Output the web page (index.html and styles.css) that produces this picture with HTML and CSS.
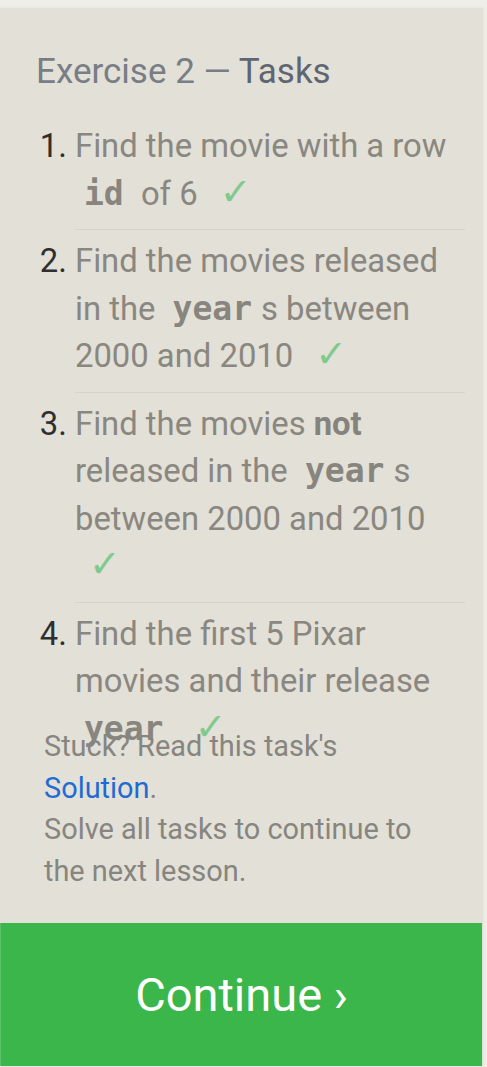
FILE: index.html
```html
<!DOCTYPE html>
<html lang="en">
<head>
<meta charset="utf-8">
<title>Exercise 2 — Tasks</title>
<link rel="stylesheet" href="styles.css">
</head>
<body>
<div class="panel">
  <h2 class="title"><span class="title-pre">Exercise 2 —</span> <span class="title-main">Tasks</span></h2>
  <ol class="tasks">
    <li class="task">Find the movie with a row <code class="code">id</code> of 6 <span class="check">✓</span></li>
    <li class="task">Find the movies released in the <code class="code">year</code>s between 2000 and 2010 <span class="check">✓</span></li>
    <li class="task">Find the movies <strong class="strong">not</strong> released in the <code class="code">year</code>s between 2000 and 2010 <span class="check">✓</span></li>
    <li class="task">Find the first 5 Pixar movies and their release <code class="code">year</code> <span class="check">✓</span></li>
  </ol>
  <div class="help">
    <p class="help-line">Stuck? Read this task's <a class="link" href="#">Solution</a>.</p>
    <p class="help-line">Solve all tasks to continue to the next lesson.</p>
  </div>
  <a class="continue" href="#">Continue ›</a>
</div>
</body>
</html>
```

FILE: styles.css
```css
html, body {
  margin: 0;
  padding: 0;
}
body {
  background: #f0eee8;
  font-family: Roboto, "Liberation Sans", Arial, sans-serif;
  height: 1067px;
  overflow: hidden;
}
.panel {
  margin-top: 8px;
  width: 483px;
  background: #e2e0d7;
  box-shadow: 0 0 3px rgba(0, 0, 0, 0.08);
  display: flex;
  flex-direction: column;
}
.title {
  margin: 44px 0 0 0;
  padding-left: 36px;
  font-size: 35px;
  font-weight: 400;
  line-height: 40px;
}
.title-pre {
  color: #787d86;
}
.title-main {
  color: #5f6672;
}
.tasks {
  margin: 23px 18px 0 0;
  padding-left: 75px;
  height: 611px;
  box-sizing: border-box;
  overflow: visible;
}
.task {
  font-size: 32.8px;
  line-height: 47.5px;
  color: #8a8781;
  padding: 8px 0 11px 0;
  border-bottom: 1px solid #d6d3ca;
}
.task:last-child {
  border-bottom: none;
}
.task::marker {
  color: #2f2f2f;
}
.code {
  font-family: "DejaVu Sans Mono", "Liberation Mono", monospace;
  font-weight: bold;
  font-size: 33px;
  line-height: 1;
  color: #88857f;
  padding: 0 9px;
}
.strong {
  font-weight: 700;
  color: #86837d;
}
.check {
  font-family: "DejaVu Sans", sans-serif;
  color: #7fca8c;
  font-size: 38px;
  line-height: 0;
  margin-left: 14px;
}
.help {
  padding: 0 36px 0 44px;
}
.help-line {
  margin: 0;
  font-size: 28.9px;
  line-height: 41.5px;
  color: #878580;
}
.link {
  color: #1f6bd3;
  text-decoration: none;
}
.continue {
  margin-top: 31px;
  height: 143px;
  width: 482px;
  background: #3bb64a;
  border-left: 1px solid #5cc167;
  box-sizing: border-box;
  color: #ffffff;
  font-size: 47px;
  text-decoration: none;
  display: flex;
  align-items: center;
  justify-content: center;
}
```
